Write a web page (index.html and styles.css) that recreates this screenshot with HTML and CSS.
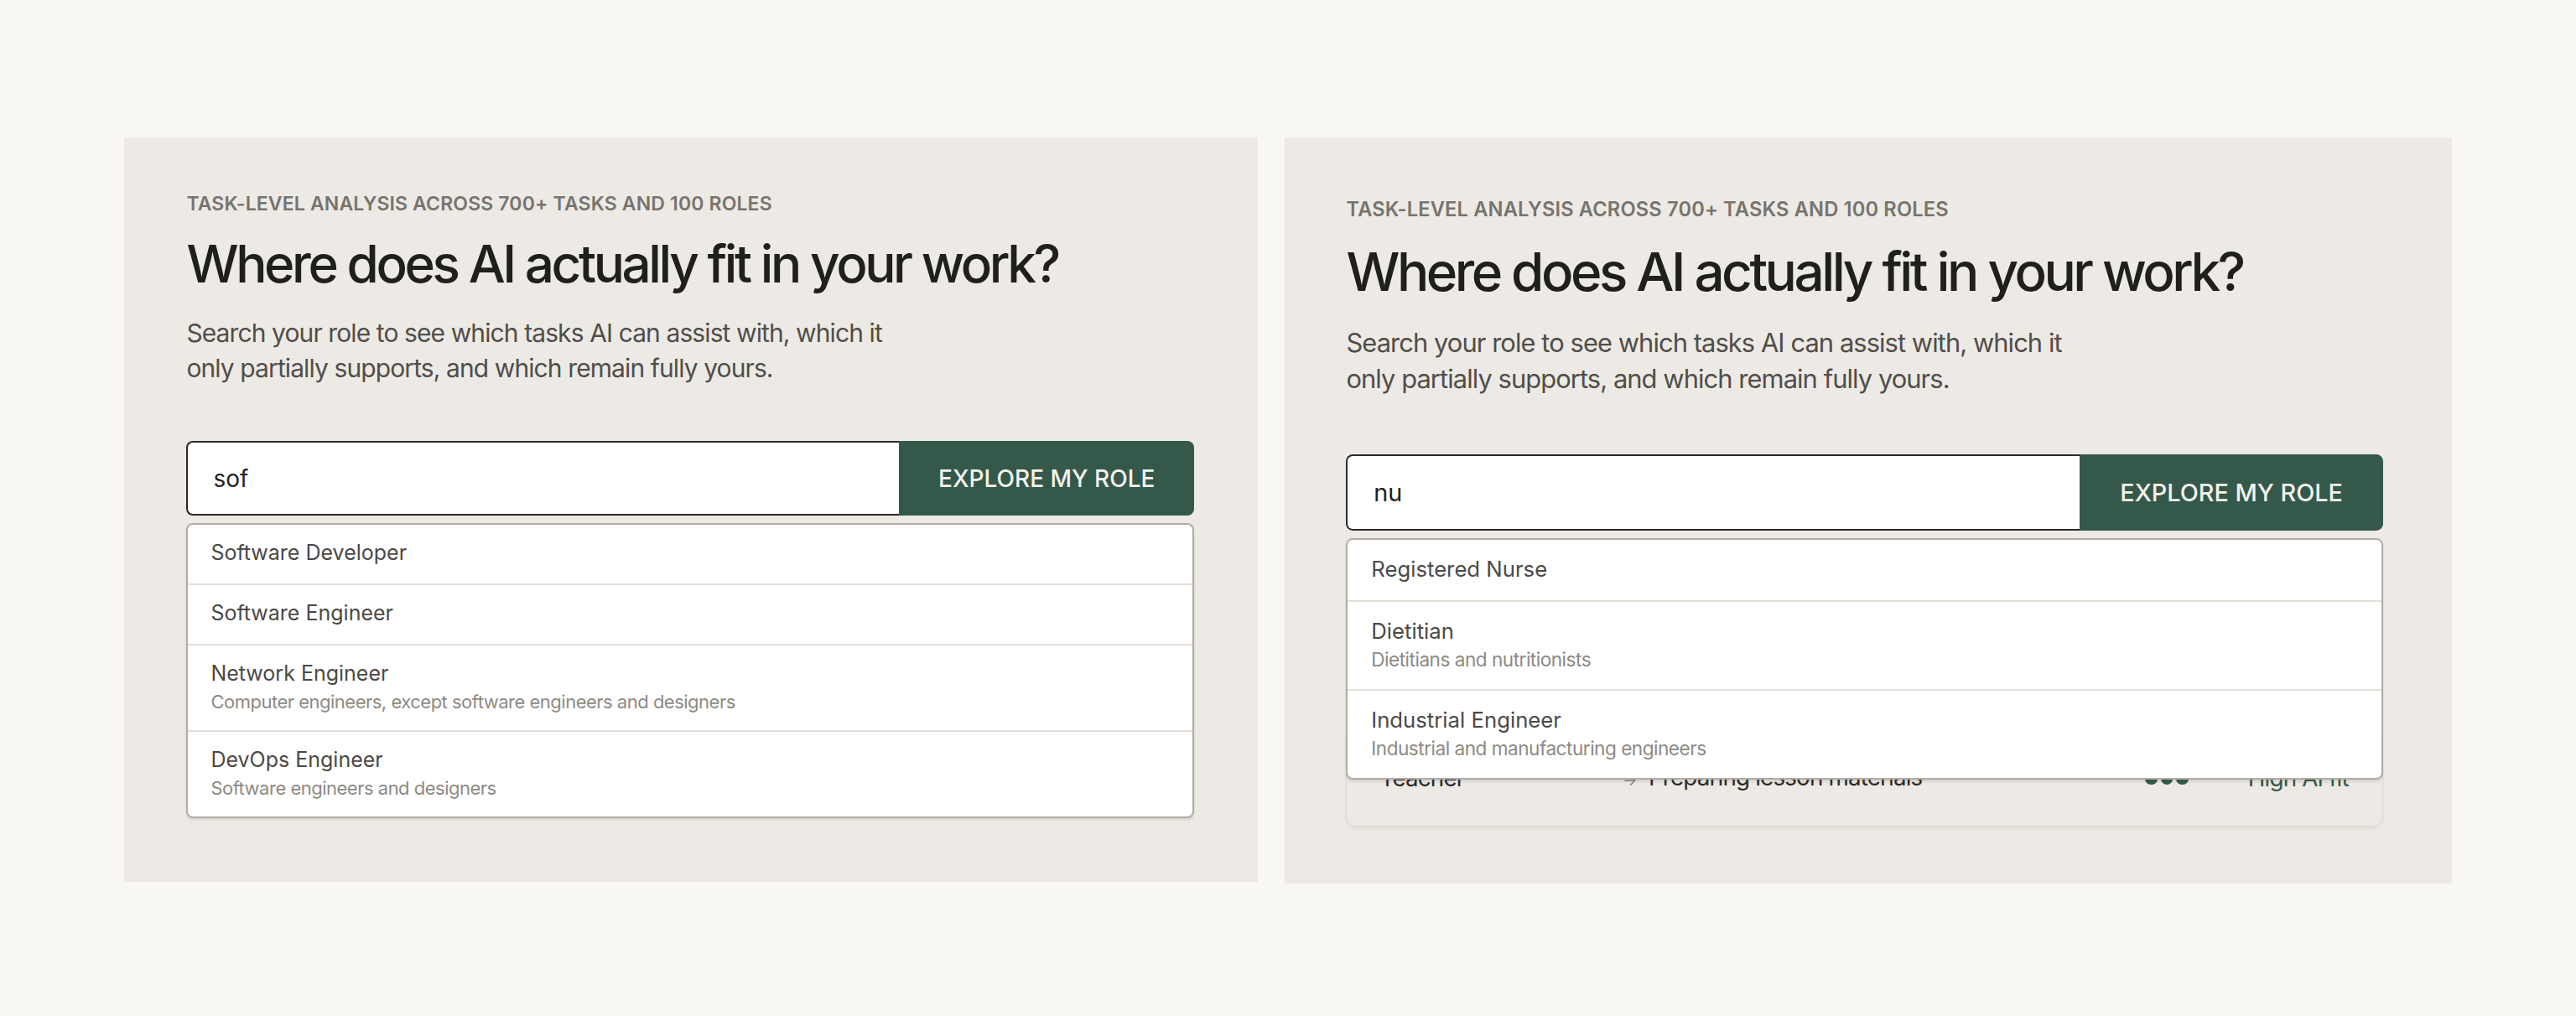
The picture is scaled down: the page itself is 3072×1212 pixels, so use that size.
FILE: index.html
```html
<!DOCTYPE html>
<html lang="en">
<head>
  <meta charset="UTF-8" />
  <meta name="viewport" content="width=device-width, initial-scale=1.0"/>
  <title>Where does AI actually fit in your work?</title>
  <link rel="stylesheet" href="styles.css">
</head>
<body>

  <main class="board">

    <section class="panel">
      <p class="eyebrow">Task-level analysis across 700+ tasks and 100 roles</p>
      <h1>Where does AI actually fit in your work?</h1>
      <p class="lead">Search your role to see which tasks AI can assist with, which it only partially supports, and which remain fully yours.</p>

      <form class="search">
        <input type="text" value="sof" />
        <button type="button">Explore my role</button>
        <ul class="suggestions">
          <li><span class="role">Software Developer</span></li>
          <li><span class="role">Software Engineer</span></li>
          <li>
            <span class="role">Network Engineer</span>
            <span class="group">Computer engineers, except software engineers and designers</span>
          </li>
          <li>
            <span class="role">DevOps Engineer</span>
            <span class="group">Software engineers and designers</span>
          </li>
        </ul>
      </form>
    </section>

    <section class="panel panel--zoomed">
      <p class="eyebrow">Task-level analysis across 700+ tasks and 100 roles</p>
      <h1>Where does AI actually fit in your work?</h1>
      <p class="lead">Search your role to see which tasks AI can assist with, which it only partially supports, and which remain fully yours.</p>

      <form class="search">
        <input type="text" value="nu" />
        <button type="button">Explore my role</button>
        <ul class="suggestions">
          <li><span class="role">Registered Nurse</span></li>
          <li>
            <span class="role">Dietitian</span>
            <span class="group">Dietitians and nutritionists</span>
          </li>
          <li>
            <span class="role">Industrial Engineer</span>
            <span class="group">Industrial and manufacturing engineers</span>
          </li>
        </ul>
      </form>

      <!-- sample row, sits behind the open suggestions list -->
      <div class="preview">
        <div class="preview-row">
          <span class="preview-role">Teacher</span>
          <span class="preview-task">Preparing lesson materials</span>
          <span class="fit-dots"><i></i><i></i><i></i></span>
          <span class="fit-label">High AI fit</span>
        </div>
      </div>
    </section>

  </main>

</body>
</html>
```

FILE: styles.css
```css
* {
  box-sizing: border-box;
}

body {
  margin: 0;
  background-color: #f8f7f4;
  font-family: 'Inter', 'DejaVu Sans', sans-serif;
  color: #1f1f1d;
}

.board {
  display: flex;
  justify-content: center;
  align-items: flex-start;
  gap: 32px;
  padding-top: 164px;
}

.panel {
  width: 1352px;
  min-height: 888px;
  padding: 65px 76px 66px 74px;
  background-color: #edeae5;
}

/* second shot was taken at a slightly bigger zoom */
.panel--zoomed {
  zoom: 1.029;
  min-height: 862px;
  padding: 70px 79px 66px 71px;
}

.eyebrow {
  margin: 0;
  font-size: 23px;
  line-height: 28px;
  font-weight: 600;
  letter-spacing: 0.15px;
  text-transform: uppercase;
  color: #77746e;
}

h1 {
  margin: 22px 0 0;
  font-size: 62px;
  line-height: 72px;
  font-weight: 500;
  letter-spacing: -0.055em;
  color: #1f1f1d;
}

.lead {
  margin: 25px 0 0;
  max-width: 860px;
  font-size: 30px;
  line-height: 42px;
  letter-spacing: -0.03em;
  color: #504e4a;
}

.search {
  position: relative;
  display: flex;
  height: 89px;
  margin: 66px 0 0;
}

.search input {
  flex: 1;
  min-width: 0;
  height: 100%;
  padding: 0 30px;
  border: 2px solid #2a2a28;
  border-right: none;
  border-radius: 8px 0 0 8px;
  background-color: #ffffff;
  font-family: inherit;
  font-size: 28px;
  color: #222220;
  outline: none;
}

.search button {
  padding: 0 47px;
  border: none;
  border-radius: 0 8px 8px 0;
  background-color: #34594a;
  color: #f4f2ed;
  font-family: inherit;
  font-size: 28px;
  font-weight: 500;
  letter-spacing: 0;
  text-transform: uppercase;
  cursor: pointer;
}

.suggestions {
  position: absolute;
  top: calc(100% + 9px);
  left: 0;
  right: 0;
  z-index: 2;
  margin: 0;
  padding: 0;
  list-style: none;
  background-color: #ffffff;
  border: 2px solid #b1aca4;
  border-radius: 8px;
  box-shadow: 0 2px 3px rgba(60, 50, 40, 0.12);
}

.suggestions li {
  padding: 16px 27px 19px;
  border-bottom: 2px solid #e3dfd9;
}

.suggestions li:last-child {
  border-bottom: none;
}

.role {
  display: block;
  font-size: 25px;
  line-height: 35px;
  color: #4b4946;
}

.group {
  display: block;
  margin-top: 1px;
  font-size: 22px;
  line-height: 30px;
  letter-spacing: -0.5px;
  color: #8d8a84;
}

.preview {
  margin-top: 229px;
  padding: 24px 37px 21px 38px;
  border: 1px solid #dcd8d1;
  border-radius: 12px;
  box-shadow: 0 2px 3px rgba(60, 50, 40, 0.06);
}

.preview-row {
  display: flex;
  align-items: center;
  padding: 14px 0;
  font-size: 27px;
  line-height: 36px;
  letter-spacing: -0.03em;
  color: #2b2a28;
}

.preview-role {
  width: 281px;
}

.preview-task {
  flex: 1;
}

.preview-task::before {
  content: "→";
  margin-right: 14px;
  font-size: 18px;
  color: #8a877f;
}

.fit-dots {
  display: flex;
  gap: 4px;
}

.fit-dots i {
  width: 14px;
  height: 14px;
  border-radius: 50%;
  background-color: #34594a;
}

.fit-label {
  min-width: 119px;
  margin-left: 69px;
  white-space: nowrap;
  color: #34594a;
}
```
